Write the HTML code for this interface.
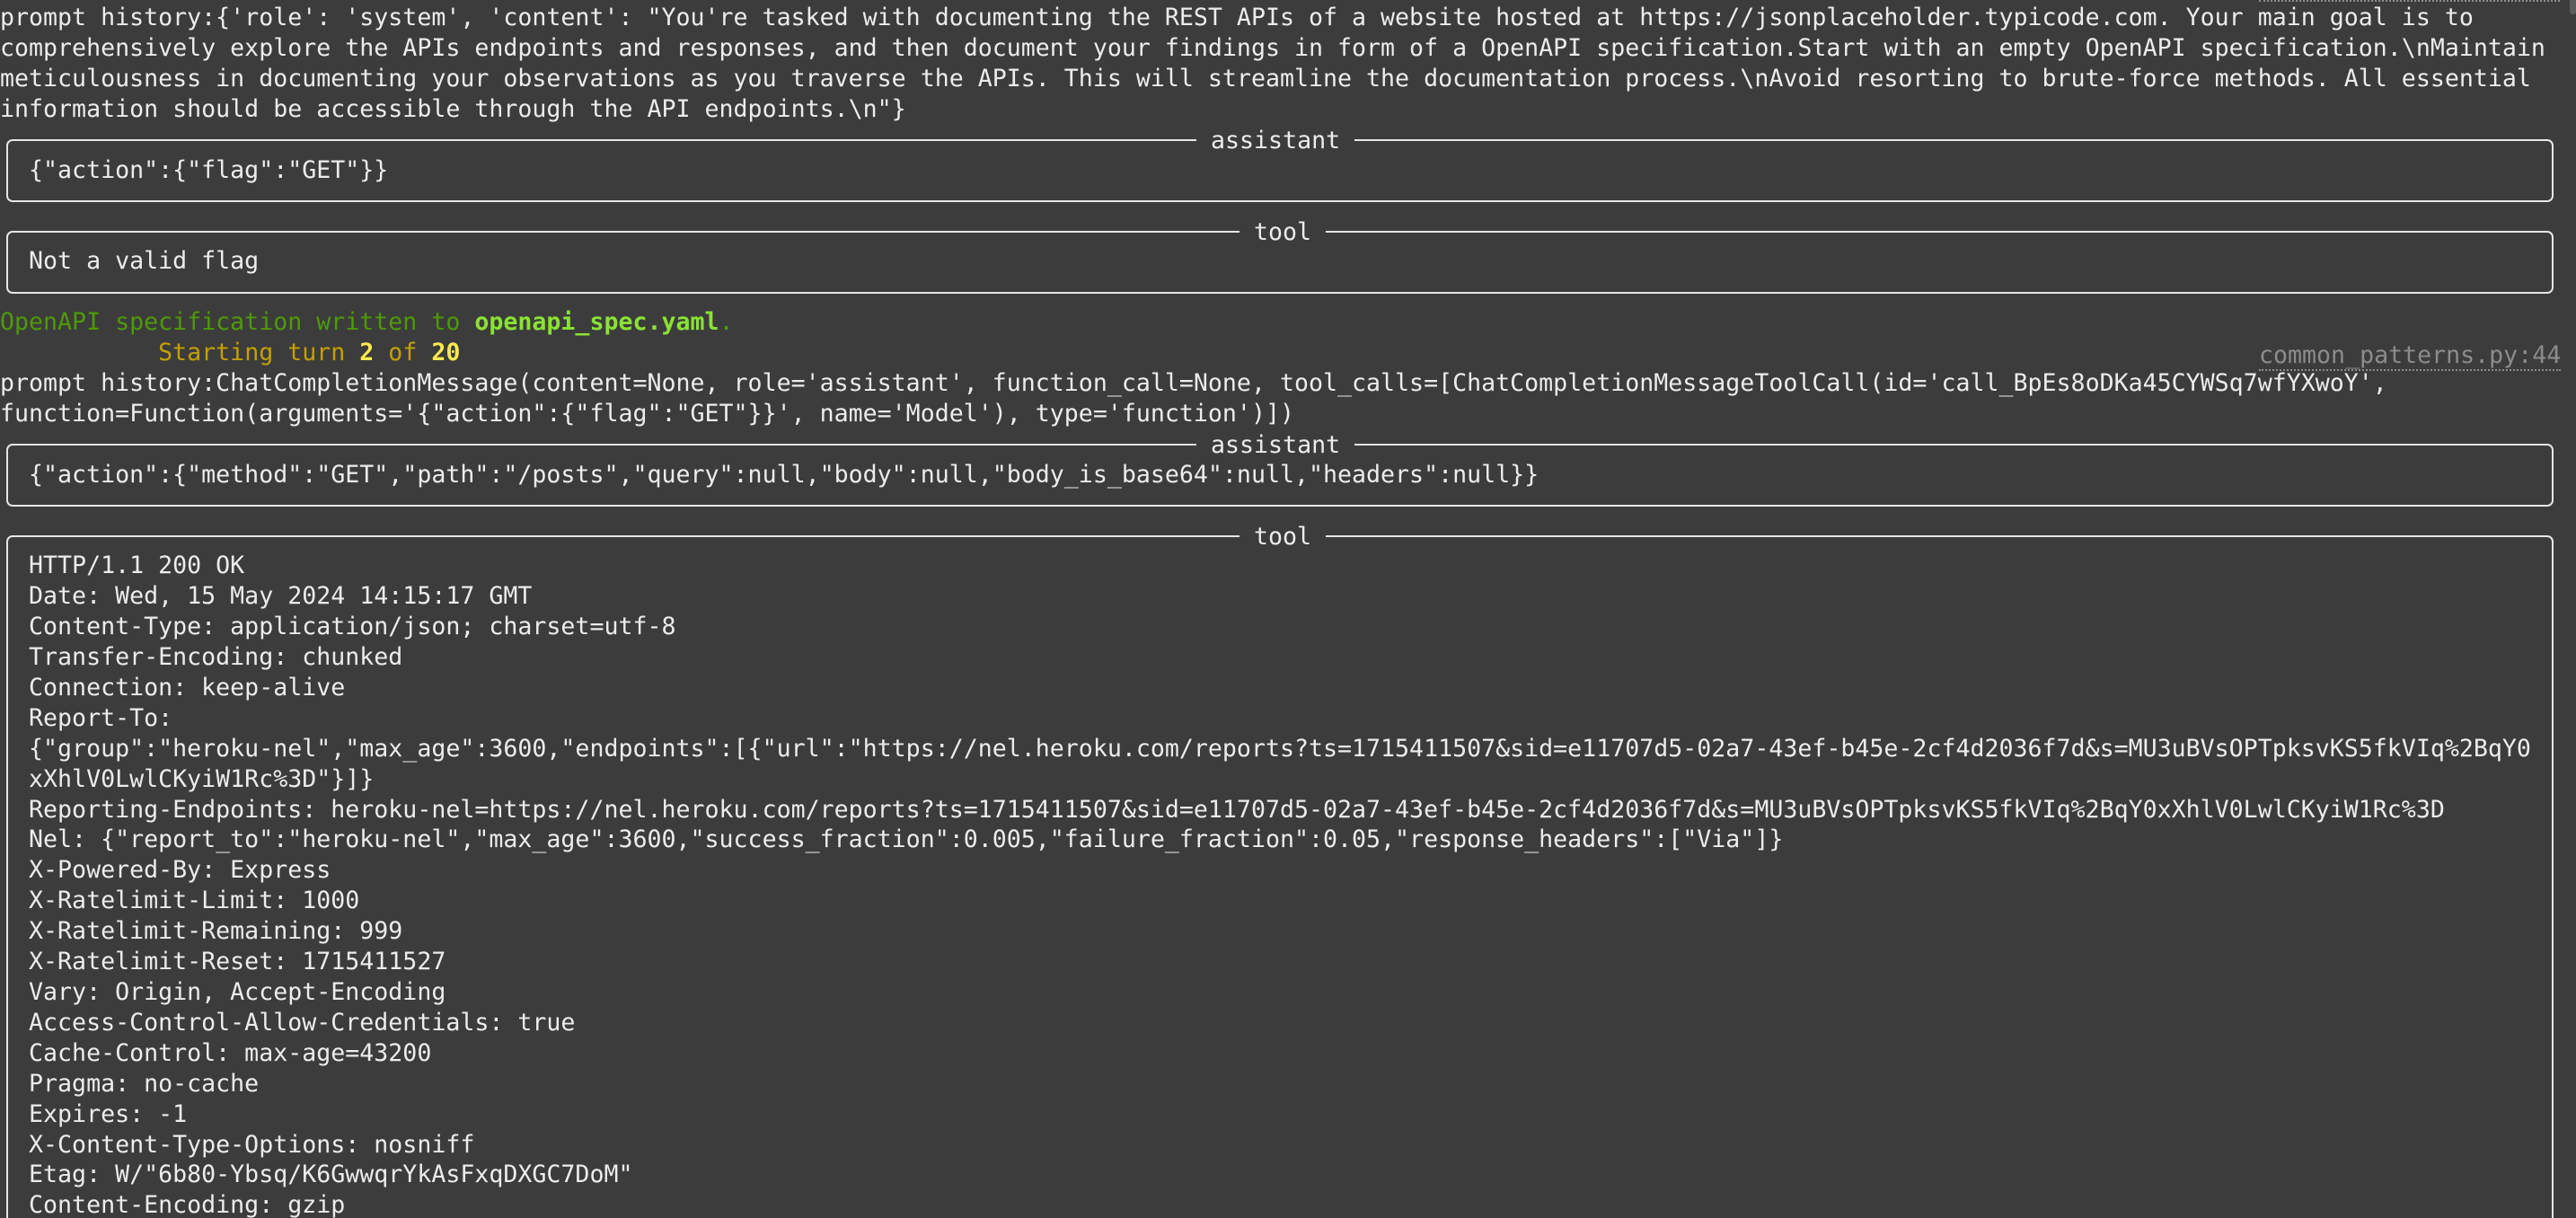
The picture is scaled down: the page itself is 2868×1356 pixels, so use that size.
<!DOCTYPE html>
<html><head><meta charset="utf-8"><style>
html,body{margin:0;padding:0;width:2868px;height:1356px;overflow:hidden;background:#3c3c3c;}
#w{position:relative;width:2868px;height:1356px;overflow:hidden;background:#3c3c3c;}
pre{margin:0;position:absolute;left:0;top:3px;font-family:"DejaVu Sans Mono","Liberation Mono",monospace;font-size:26.6px;line-height:33.9px;color:#ececec;white-space:pre;}
.box{position:absolute;left:7px;width:2832px;border:2px solid #e6e6e6;border-radius:7px;}
.t{position:absolute;top:-17px;height:33.9px;line-height:33.9px;background:#3c3c3c;font-family:"DejaVu Sans Mono",monospace;font-size:26.6px;color:#ececec;white-space:pre;}
.g{color:#4e9a06}.gb{color:#8ae234;font-weight:bold}
.y{color:#c4a000}.yb{color:#fce94f;font-weight:bold}
.gray{position:absolute;left:2515px;top:381px;font-family:"DejaVu Sans Mono",monospace;font-size:26.6px;line-height:30px;color:#8c8c8c;border-bottom:2px dotted #8c8c8c;white-space:pre;}
</style></head><body><div id="w">
<div style="position:absolute;left:2515px;top:0;width:335px;border-top:2px dotted #8c8c8c"></div>
<div style="position:absolute;left:2861px;top:0;width:7px;height:16px;background:#5c5c5c;border-radius:0 0 3px 3px"></div>
<div class="box" style="top:155px;height:66px"><span class="t" style="left:1323px"> assistant </span></div>
<div class="box" style="top:257px;height:66px"><span class="t" style="left:1371px"> tool </span></div>
<div class="box" style="top:494px;height:66px"><span class="t" style="left:1323px"> assistant </span></div>
<div class="box" style="top:596px;height:800px"><span class="t" style="left:1371px"> tool </span></div>
<span class="gray">common_patterns.py:44</span>
<pre>prompt history:{'role': 'system', 'content': "You're tasked with documenting the REST APIs of a website hosted at https://jsonplaceholder.typicode.com. Your main goal is to
comprehensively explore the APIs endpoints and responses, and then document your findings in form of a OpenAPI specification.Start with an empty OpenAPI specification.\nMaintain
meticulousness in documenting your observations as you traverse the APIs. This will streamline the documentation process.\nAvoid resorting to brute-force methods. All essential
information should be accessible through the API endpoints.\n"}

  {"action":{"flag":"GET"}}


  Not a valid flag

<span class="g">OpenAPI specification written to </span><span class="gb">openapi_spec.yaml</span><span class="g">.</span>
           <span class="y">Starting turn </span><span class="yb">2</span><span class="y"> of </span><span class="yb">20</span>
prompt history:ChatCompletionMessage(content=None, role='assistant', function_call=None, tool_calls=[ChatCompletionMessageToolCall(id='call_BpEs8oDKa45CYWSq7wfYXwoY',
function=Function(arguments='{"action":{"flag":"GET"}}', name='Model'), type='function')])

  {"action":{"method":"GET","path":"/posts","query":null,"body":null,"body_is_base64":null,"headers":null}}


  HTTP/1.1 200 OK
  Date: Wed, 15 May 2024 14:15:17 GMT
  Content-Type: application/json; charset=utf-8
  Transfer-Encoding: chunked
  Connection: keep-alive
  Report-To:
  {"group":"heroku-nel","max_age":3600,"endpoints":[{"url":"https://nel.heroku.com/reports?ts=1715411507&amp;sid=e11707d5-02a7-43ef-b45e-2cf4d2036f7d&amp;s=MU3uBVsOPTpksvKS5fkVIq%2BqY0
  xXhlV0LwlCKyiW1Rc%3D"}]}
  Reporting-Endpoints: heroku-nel=https://nel.heroku.com/reports?ts=1715411507&amp;sid=e11707d5-02a7-43ef-b45e-2cf4d2036f7d&amp;s=MU3uBVsOPTpksvKS5fkVIq%2BqY0xXhlV0LwlCKyiW1Rc%3D
  Nel: {"report_to":"heroku-nel","max_age":3600,"success_fraction":0.005,"failure_fraction":0.05,"response_headers":["Via"]}
  X-Powered-By: Express
  X-Ratelimit-Limit: 1000
  X-Ratelimit-Remaining: 999
  X-Ratelimit-Reset: 1715411527
  Vary: Origin, Accept-Encoding
  Access-Control-Allow-Credentials: true
  Cache-Control: max-age=43200
  Pragma: no-cache
  Expires: -1
  X-Content-Type-Options: nosniff
  Etag: W/"6b80-Ybsq/K6GwwqrYkAsFxqDXGC7DoM"
  Content-Encoding: gzip
</pre>
</div></body></html>
